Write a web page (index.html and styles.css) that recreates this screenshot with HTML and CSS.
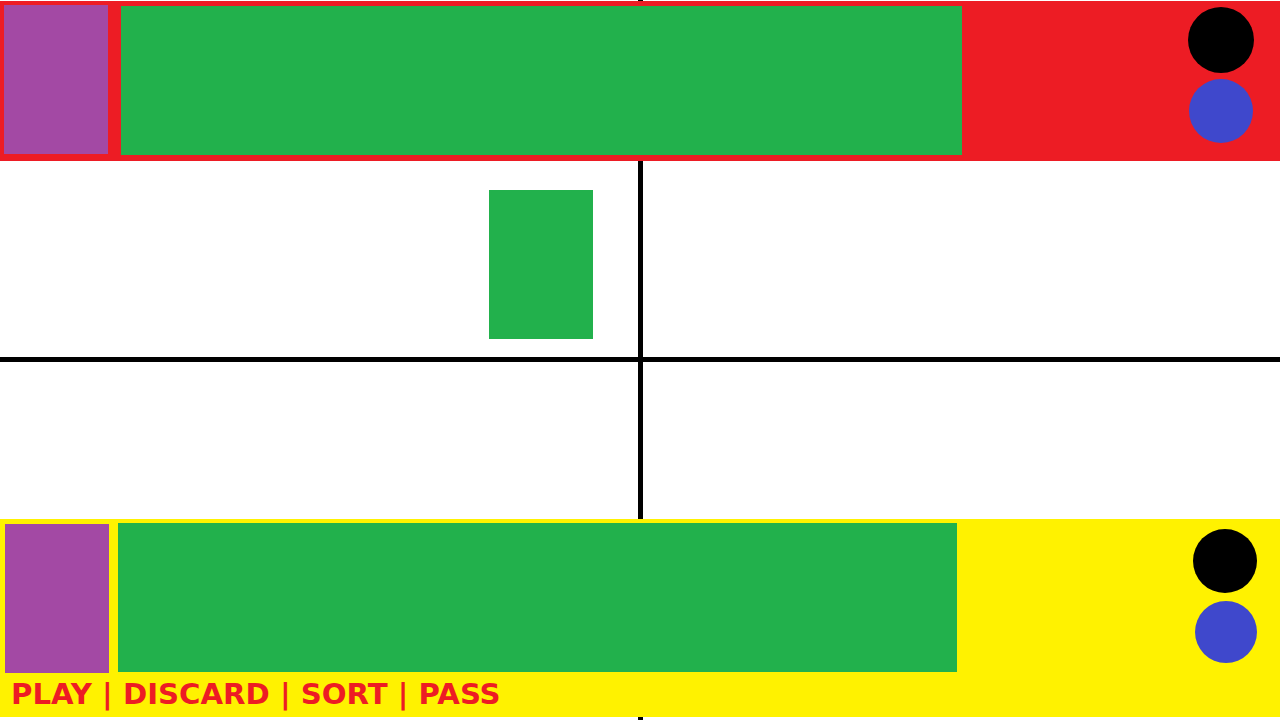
FILE: index.html
```html
<!DOCTYPE html>
<html lang="en">
<head>
    <meta charset="UTF-8">
    <meta name="viewport" content="width=device-width, initial-scale=1.0">
    <title>Card Table</title>
    <link rel="stylesheet" href="styles.css">
</head>
<body>
    <div class="table">
        <!-- Opponent seat -->
        <div class="seat seat-top">
            <div class="deck"></div>
            <div class="hand"></div>
            <div class="tokens">
                <span class="token token-black"></span>
                <span class="token token-blue"></span>
            </div>
        </div>

        <!-- Play area -->
        <div class="pile-area">
            <div class="quarter quarter-left">
                <div class="pile"></div>
            </div>
            <div class="quarter"></div>
        </div>

        <!-- Player seat -->
        <div class="seat seat-bottom">
            <div class="seat-row">
                <div class="deck"></div>
                <div class="hand"></div>
                <div class="tokens">
                    <span class="token token-black"></span>
                    <span class="token token-blue"></span>
                </div>
            </div>
            <div class="actions">PLAY | DISCARD | SORT | PASS</div>
        </div>
    </div>
</body>
</html>
```

FILE: styles.css
```css
/* General Styles */
body {
    margin: 0;
    padding: 0;
    font-family: 'Liberation Sans', Arial, sans-serif;
    background: #ffffff;
    overflow: hidden;
}

.table {
    width: 1280px;
    height: 720px;
    padding-top: 1px;
    box-sizing: border-box;
    /* the cross lines that split the table */
    background:
        linear-gradient(#000, #000) 638px 0 / 5px 100% no-repeat,
        linear-gradient(#000, #000) 0 357px / 100% 5px no-repeat,
        #ffffff;
}

.seat {
    display: flex;
    width: 100%;
    box-sizing: border-box;
}

.deck {
    width: 104px;
    height: 149px;
    background: #a349a4;
    flex-shrink: 0;
}

.hand {
    height: 149px;
    background: #22b14c;
    flex-shrink: 0;
}

.tokens {
    margin-left: auto;
    display: flex;
    flex-direction: column;
    align-items: center;
}

.token {
    display: block;
    border-radius: 50%;
}

.token-black {
    background: #000000;
}

.token-blue {
    background: #3f48cc;
}

/* Top seat */
.seat-top {
    height: 160px;
    background: #ed1c24;
    padding: 4px 26px 0 4px;
    align-items: flex-start;
}

.seat-top .hand {
    width: 841px;
    margin: 1px 0 0 13px;
}

.seat-top .tokens {
    padding-top: 2px;
    gap: 6px;
}

.seat-top .token-black {
    width: 66px;
    height: 66px;
}

.seat-top .token-blue {
    width: 64px;
    height: 64px;
}

/* Middle */
.pile-area {
    height: 358px;
    display: grid;
    grid-template-columns: 640px 640px;
}

.quarter-left {
    display: flex;
    justify-content: flex-end;
    padding: 29px 47px 0 0;
}

.pile {
    width: 104px;
    height: 149px;
    background: #22b14c;
}

/* Bottom seat */
.seat-bottom {
    height: 198px;
    background: #fff200;
    flex-direction: column;
    padding: 4px 23px 0 5px;
}

.seat-row {
    display: flex;
    align-items: flex-start;
}

.seat-bottom .deck {
    margin-top: 1px;
}

.seat-bottom .hand {
    width: 839px;
    margin-left: 9px;
}

.seat-bottom .tokens {
    padding-top: 6px;
    gap: 8px;
}

.seat-bottom .token-black {
    width: 64px;
    height: 64px;
}

.seat-bottom .token-blue {
    width: 62px;
    height: 62px;
    margin-left: 2px;
}

.actions {
    margin: 7px 0 0 6px;
    font-family: 'DejaVu Sans', sans-serif;
    font-size: 29.2px;
    line-height: 29px;
    font-weight: bold;
    color: #ed1c24;
}
```
